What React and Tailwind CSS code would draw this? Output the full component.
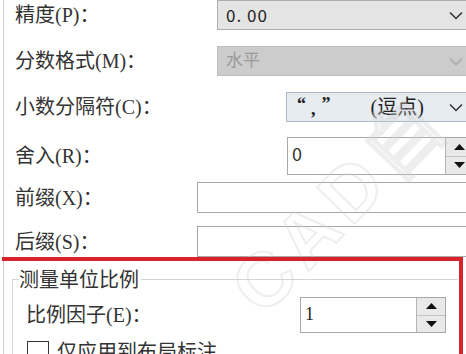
import React from 'react';

const label = "font-['Liberation_Serif','Noto_Sans_CJK_SC',serif] text-[20px] text-[#333] whitespace-nowrap";

const Chevron = ({ color = '#333' }) => (
  <svg width="14" height="9" viewBox="0 0 14 9" className="shrink-0">
    <path d="M1 1.5 L7 7.5 L13 1.5" fill="none" stroke={color} strokeWidth="1.5" />
  </svg>
);

const SpinButtons = ({ w = 'w-[23px]' }) => (
  <div className={`${w} flex flex-col border-l border-[#b5b5b5]`}>
    <div className="flex-1 flex items-center justify-center bg-[#e9e9e9] border-b border-[#c4c4c4]">
      <svg width="11" height="6" viewBox="0 0 11 6"><path d="M0 6 L5.5 0 L11 6 Z" fill="#111" /></svg>
    </div>
    <div className="flex-1 flex items-center justify-center bg-[#e9e9e9]">
      <svg width="11" height="6" viewBox="0 0 11 6"><path d="M0 0 L5.5 6 L11 0 Z" fill="#111" /></svg>
    </div>
  </div>
);

const Row = ({ h, mt, text, children }) => (
  <div className={`flex items-center ${h} ${mt}`}>
    <div className={`flex-1 pl-[11px] ${label}`}>{text}</div>
    {children}
  </div>
);

export default function App() {
  return (
    <div className="relative w-[466px] h-[354px] overflow-hidden bg-white">
      <div className="ml-[3px] h-full border-l border-[#cfcfcf] w-[470px]">
        <Row h="h-[30px]" mt="mt-0" text="精度(P)：">
          <div className="w-[256px] h-full flex items-center justify-between bg-[#e4e4e4] border border-[#adadad] pl-[8px] pr-[9px]">
            <span className="font-['Noto_Sans_CJK_SC',sans-serif] text-[17px] text-[#222] tracking-[1px]">0. 00</span>
            <Chevron />
          </div>
        </Row>
        <Row h="h-[30px]" mt="mt-[16px]" text="分数格式(M)：">
          <div className="w-[256px] h-full flex items-center justify-between bg-[#cccccc] border border-[#bdbdbd] pl-[8px] pr-[9px]">
            <span className="font-['Liberation_Serif','Noto_Sans_CJK_SC',serif] text-[17px] text-[#9a9a9a]">水平</span>
            <Chevron color="#a8a8a8" />
          </div>
        </Row>
        <Row h="h-[30px]" mt="mt-[16px]" text="小数分隔符(C)：">
          <div className="w-[187px] h-full flex items-center justify-between bg-[#e7ecf1] border border-[#a9b7c6] pl-[10px] pr-[9px]">
            <span className="flex items-center text-[#222] font-['Liberation_Serif','Noto_Sans_CJK_SC',serif]">
              <span className="text-[18px] font-bold leading-none -mt-[6px]">“</span>
              <span className="ml-[5px] text-[18px] font-bold leading-none mt-[4px]">,</span>
              <span className="ml-[6px] text-[18px] font-bold leading-none -mt-[6px]">”</span>
              <span className="ml-[40px] text-[20px]">(逗点)</span>
            </span>
            <Chevron />
          </div>
        </Row>
        <Row h="h-[38px]" mt="mt-[15px]" text="舍入(R)：">
          <div className="w-[186px] h-full flex bg-white border border-[#a8a8a8]">
            <div className="flex-1 pl-[4px] pt-[3px] font-['Noto_Sans_CJK_SC',sans-serif] text-[18px] text-[#333] leading-[24px]">0</div>
            <SpinButtons w="w-[27px]" />
          </div>
        </Row>
        <Row h="h-[31px]" mt="mt-[7px]" text="前缀(X)：">
          <div className="w-[276px] h-full bg-white border border-[#a8a8a8]" />
        </Row>
        <Row h="h-[31px]" mt="mt-[13px]" text="后缀(S)：">
          <div className="w-[276px] h-full bg-white border border-[#a8a8a8]" />
        </Row>

        <div className="relative ml-[8px] mt-[22px] w-[446px] h-[120px] border-l border-t border-[#d4d4d4]">
          <div className={`absolute left-[6px] top-[-15px] bg-white pr-[2px] ${label}`}>测量单位比例</div>
          <div className="flex items-center mt-[17px] h-[36px]">
            <div className={`flex-1 pl-[13px] ${label}`}>比例因子(E)：</div>
            <div className="w-[146px] h-full flex border border-[#a8a8a8] bg-white mr-[12px]">
              <div className="flex-1 pl-[4px] pt-[4px] font-['Liberation_Serif','Noto_Sans_CJK_SC',serif] text-[18px] text-[#222] leading-[24px]">1</div>
              <SpinButtons w="w-[29px]" />
            </div>
          </div>
          <div className="flex items-center mt-[4px] pl-[14px] gap-[8px]">
            <div className="w-[22px] h-[22px] border border-[#333] bg-white shrink-0" />
            <span className={label}>仅应用到布局标注</span>
          </div>
        </div>
      </div>

      <div className="absolute left-[245px] top-[262px] -rotate-[46deg] origin-left pointer-events-none font-['Liberation_Sans',sans-serif] font-bold text-[76px] leading-none text-transparent tracking-[8px] [-webkit-text-stroke:2px_rgba(205,205,205,0.35)] whitespace-nowrap">
        CAD自
      </div>

      <div className="absolute left-[2px] top-[257px] w-[461px] h-[120px] border-t-[4px] border-r-[4px] border-[#d8232a] pointer-events-none" />
    </div>
  );
}
